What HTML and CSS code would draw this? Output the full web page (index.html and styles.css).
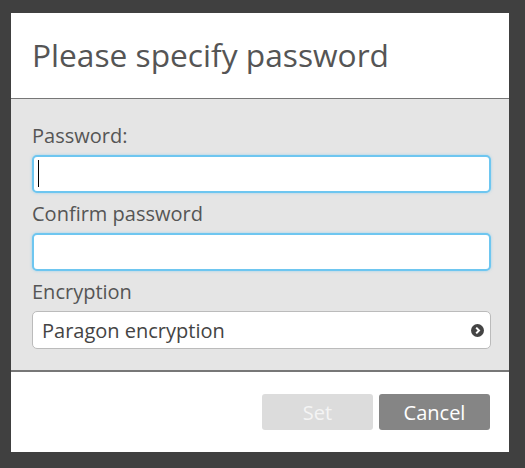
FILE: index.html
```html
<!DOCTYPE html>
<html lang="en">
<head>
    <meta charset="UTF-8">
    <meta name="viewport" content="width=device-width, initial-scale=1.0">
    <title>Please specify password</title>
    <link rel="stylesheet" href="styles.css">
</head>
<body>
    <div class="dialog">
        <div class="dialog-header">
            <h2>Please specify password</h2>
        </div>

        <div class="dialog-body">
            <label class="field-label" for="password">Password:</label>
            <div class="input-wrap">
                <input type="password" id="password" class="field-input">
                <span class="caret"></span>
            </div>

            <label class="field-label" for="confirm">Confirm password</label>
            <div class="input-wrap">
                <input type="password" id="confirm" class="field-input">
            </div>

            <label class="field-label">Encryption</label>
            <div class="field-select">
                <span>Paragon encryption</span>
                <svg class="select-icon" width="13" height="13" viewBox="0 0 13 13">
                    <circle cx="6.5" cy="6.5" r="6.5" fill="#444"/>
                    <path d="M5.2 3.6 L8 6.5 L5.2 9.4" fill="none" stroke="#fff" stroke-width="2"/>
                </svg>
            </div>
        </div>

        <div class="dialog-footer">
            <button class="btn btn-disabled" disabled>Set</button>
            <button class="btn btn-cancel">Cancel</button>
        </div>
    </div>
</body>
</html>
```

FILE: styles.css
```css
body {
    font-family: "Open Sans", "Noto Sans", sans-serif;
    margin: 0;
    padding: 13px 0 0 11px;
    background-color: #404040;
    height: 468px;
    box-sizing: border-box;
}

.dialog {
    width: 498px;
    background-color: #fff;
}

.dialog-header {
    height: 85px;
    border-bottom: 1px solid #777;
    padding: 0 21px;
}

.dialog-header h2 {
    margin: 0;
    padding-top: 20px;
    font-size: 31.7px;
    font-weight: normal;
    line-height: 44px;
    color: #555;
}

.dialog-body {
    background-color: #e5e5e5;
    padding: 23px 18px 21px 21px;
    border-bottom: 2px solid #777;
}

.field-label {
    display: block;
    font-size: 20px;
    line-height: 27px;
    color: #555;
    margin-bottom: 6px;
}

.input-wrap {
    position: relative;
    margin-bottom: 7px;
}

.field-input {
    display: block;
    width: 100%;
    height: 38px;
    box-sizing: border-box;
    margin: 0;
    padding: 0 5px;
    border: 2px solid #6ec6f0;
    border-radius: 5px;
    box-shadow: 0 0 3px rgba(110, 198, 240, 0.6);
    background-color: #fff;
    font-family: inherit;
    font-size: 20px;
    outline: none;
}

.caret {
    position: absolute;
    left: 6px;
    top: 5px;
    width: 1px;
    height: 27px;
    background-color: #000;
}

.field-select {
    display: flex;
    align-items: center;
    justify-content: space-between;
    height: 38px;
    box-sizing: border-box;
    padding: 0 6px 0 9px;
    border: 1px solid #bbb;
    border-radius: 5px;
    background-color: #fff;
    font-size: 20px;
    color: #444;
}

.select-icon {
    display: block;
}

.dialog-footer {
    display: flex;
    justify-content: flex-end;
    gap: 6px;
    padding: 22px 19px 22px 0;
}

.btn {
    width: 111px;
    height: 36px;
    border: none;
    border-radius: 3px;
    font-family: inherit;
    font-size: 20px;
    color: #fff;
    cursor: pointer;
}

.btn-disabled {
    background-color: #dcdcdc;
    color: #f4f4f4;
    cursor: default;
}

.btn-cancel {
    background-color: #858585;
}

.btn-cancel:hover {
    background-color: #777;
}
```
